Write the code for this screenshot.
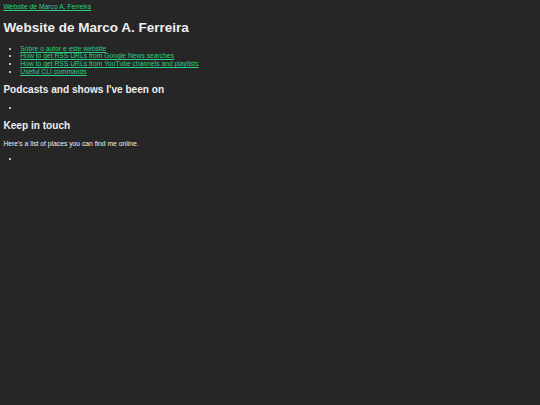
import React from "react";

export default function App() {
  return (
    <div className="min-h-[405px] bg-[#262626] text-[#eeeeee] px-[3.375px] py-[3.375px] font-['Liberation_Sans',Arial,sans-serif] text-[6.75px] leading-[1.15]">
      <header>
        <a href="#" className="text-[#2ecc85] underline">Website de Marco A. Ferreira</a>
      </header>
      <main>
        <h1 className="text-[13.5px] font-bold my-[9.05px] leading-[1.15]">Website de Marco A. Ferreira</h1>
        <ul className="list-disc pl-[16.9px] my-[6.75px]">
          <li><a href="#" className="text-[#2ecc85] underline">Sobre o autor e este website</a></li>
          <li><a href="#" className="text-[#2ecc85] underline">How to get RSS URLs from Google News searches</a></li>
          <li><a href="#" className="text-[#2ecc85] underline">How to get RSS URLs from YouTube channels and playlists</a></li>
          <li><a href="#" className="text-[#2ecc85] underline">Useful CLI commands</a></li>
        </ul>
        <h2 className="text-[10.125px] font-bold my-[8.4px] leading-[1.15]">Podcasts and shows I've been on</h2>
        <ul className="list-disc pl-[16.9px] my-[6.75px]">
          <li>&nbsp;</li>
        </ul>
        <h2 className="text-[10.125px] font-bold my-[8.4px] leading-[1.15]">Keep in touch</h2>
        <p className="my-[6.75px]">Here's a list of places you can find me online.</p>
        <ul className="list-disc pl-[16.9px] my-[6.75px]">
          <li>&nbsp;</li>
        </ul>
      </main>
    </div>
  );
}
